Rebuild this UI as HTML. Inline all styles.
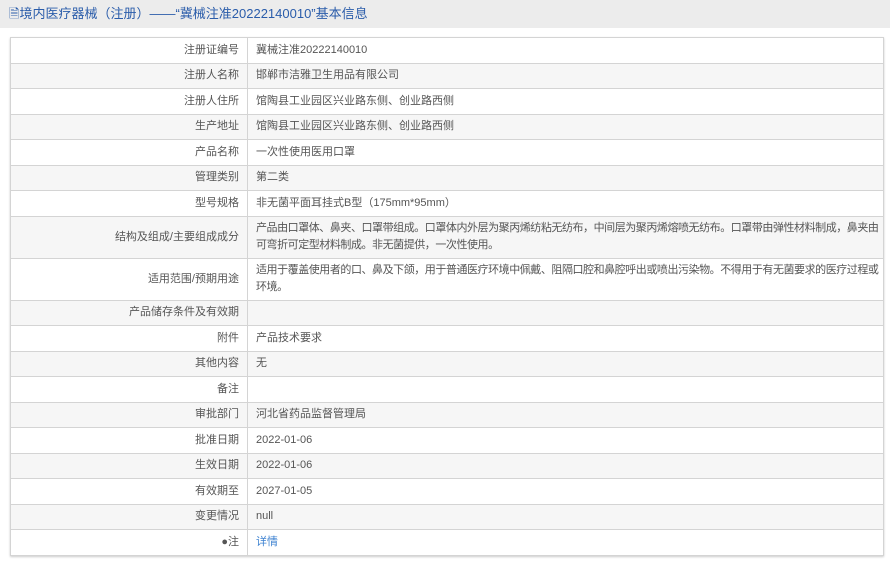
<!DOCTYPE html>
<html><head><meta charset="utf-8"><style>
body{margin:0;width:890px;height:565px;background:#fff;font-family:"Liberation Sans","Noto Sans CJK SC",sans-serif;font-size:11px;color:#555;overflow:hidden}
.hd{height:28px;background:#ececec;color:#2a5caa;font-size:13px;line-height:28px;padding-left:9px}
table{position:absolute;left:10px;top:37px;width:874px;border-collapse:collapse;box-shadow:0 1px 2px #ccc;table-layout:fixed}
td{border:1px solid #d4d4d4;height:24.5px;padding:0 8px;line-height:17px;white-space:nowrap;overflow:hidden}
td.l{text-align:right;color:#555}
tr:nth-child(even) td{background:#f6f6f6}
tr.t td{height:41px}
tr.t td.v{vertical-align:top;padding-top:3px;height:38px;letter-spacing:-0.45px}
a{color:#3b80d0;text-decoration:none}
</style></head><body>
<div class="hd">🗎境内医疗器械（注册）——“冀械注准20222140010”基本信息</div>
<table>
<colgroup><col style="width:237px"><col></colgroup>
<tr><td class="l">注册证编号</td><td>冀械注准20222140010</td></tr>
<tr><td class="l">注册人名称</td><td>邯郸市洁雅卫生用品有限公司</td></tr>
<tr><td class="l">注册人住所</td><td>馆陶县工业园区兴业路东侧、创业路西侧</td></tr>
<tr><td class="l">生产地址</td><td>馆陶县工业园区兴业路东侧、创业路西侧</td></tr>
<tr><td class="l">产品名称</td><td>一次性使用医用口罩</td></tr>
<tr><td class="l">管理类别</td><td>第二类</td></tr>
<tr><td class="l">型号规格</td><td>非无菌平面耳挂式B型（175mm*95mm）</td></tr>
<tr class="t"><td class="l">结构及组成/主要组成成分</td><td class="v">产品由口罩体、鼻夹、口罩带组成。口罩体内外层为聚丙烯纺粘无纺布，中间层为聚丙烯熔喷无纺布。口罩带由弹性材料制成，鼻夹由<br>可弯折可定型材料制成。非无菌提供，一次性使用。</td></tr>
<tr class="t"><td class="l">适用范围/预期用途</td><td class="v">适用于覆盖使用者的口、鼻及下颌，用于普通医疗环境中佩戴、阻隔口腔和鼻腔呼出或喷出污染物。不得用于有无菌要求的医疗过程或<br>环境。</td></tr>
<tr><td class="l">产品储存条件及有效期</td><td></td></tr>
<tr><td class="l">附件</td><td>产品技术要求</td></tr>
<tr><td class="l">其他内容</td><td>无</td></tr>
<tr><td class="l">备注</td><td></td></tr>
<tr><td class="l">审批部门</td><td>河北省药品监督管理局</td></tr>
<tr><td class="l">批准日期</td><td>2022-01-06</td></tr>
<tr><td class="l">生效日期</td><td>2022-01-06</td></tr>
<tr><td class="l">有效期至</td><td>2027-01-05</td></tr>
<tr><td class="l">变更情况</td><td>null</td></tr>
<tr><td class="l">●注</td><td><a>详情</a></td></tr>
</table>
</body></html>
